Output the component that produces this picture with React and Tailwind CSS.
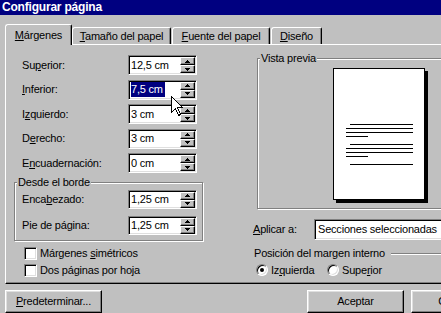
import React from 'react';

const raised = "border border-t-white border-l-white border-b-black border-r-black shadow-[inset_-1px_-1px_0_#808080,inset_1px_1px_0_#dfdfdf] bg-[#c0c0c0]";
const sunken = "border border-[#808080] border-b-white border-r-white shadow-[inset_1px_1px_0_#000,inset_-1px_-1px_0_#dfdfdf] bg-white";

const SpinBtn = ({ up }) => (
    <div className="h-[8px] w-[15px] flex items-center justify-center border border-t-white border-l-white border-b-black border-r-black shadow-[inset_-1px_-1px_0_#808080] bg-[#c0c0c0]">
        <svg width="5" height="3" viewBox="0 0 5 3" shapeRendering="crispEdges">
            {up
                ? <path d="M2 0h1v1h1v1h1v1H0V2h1V1h1z" fill="#000" />
                : <path d="M0 0h5v1H4v1H3v1H2V2H1V1H0z" fill="#000" />}
        </svg>
    </div>
);

const Field = ({ value, selected, h = 'h-[20px]' }) => (
    <div className={`${sunken} w-[69px] ${h} flex items-center justify-between pl-[2px] pr-[1px]`}>
        {selected
            ? <span className="bg-[#000080] text-white leading-[15px] pr-[2px]">{value}</span>
            : <span className="leading-[13px]">{value}</span>}
        <div className="flex flex-col">
            <SpinBtn up />
            <SpinBtn />
        </div>
    </div>
);

const Group = ({ title, className, children }) => (
    <div className={`relative border border-[#808080] shadow-[inset_1px_1px_0_#fff,1px_1px_0_#fff] ${className}`}>
        <span className="absolute -top-[7px] left-[2px] px-[1px] bg-[#c0c0c0] leading-[13px]">{title}</span>
        {children}
    </div>
);

const Lbl = ({ a, u, b }) => (
    <span className="leading-[13px] whitespace-nowrap">{a}<u>{u}</u>{b}</span>
);

const Check = ({ children }) => (
    <div className="flex items-center h-[13px]">
        <div className={`${sunken} w-[13px] h-[13px]`} />
        <div className="ml-[3px]">{children}</div>
    </div>
);

const Radio = ({ on }) => (
    <div className="w-[12px] h-[12px] rounded-full border border-[#808080] border-b-white border-r-white bg-white shadow-[inset_1px_1px_0_#000,inset_-1px_-1px_0_#dfdfdf] flex items-center justify-center">
        {on && <div className="w-[4px] h-[4px] rounded-full bg-black" />}
    </div>
);

const Tab = ({ active, w, children, className = '' }) => (
    <div className={`${w} ${active ? 'h-[21px] -mb-[1px] relative z-10 pt-[4px]' : 'h-[17px] pt-[2px]'} ${className} bg-[#c0c0c0] border-l border-t border-white border-r border-r-black rounded-tl-[3px] rounded-tr-[2px] shadow-[inset_-1px_0_0_#808080] flex justify-center`}>
        {children}
    </div>
);

const rows = [
    { l: ['Su', 'p', 'erior:'], v: '12,5 cm' },
    { l: ['', 'I', 'nferior:'], v: '7,5 cm', sel: true },
    { l: ['I', 'z', 'quierdo:'], v: '3 cm' },
    { l: ['D', 'e', 'recho:'], v: '3 cm' },
    { l: ['E', 'n', 'cuadernación:'], v: '0 cm' },
];

export default function App() {
    return (
        <div className="w-[441px] h-[313px] overflow-hidden relative bg-[#c0c0c0] text-black text-[11px] tracking-[-0.2px] font-['Liberation_Sans',Arial,sans-serif]">
            <div className="w-[520px]">
                {/* title bar */}
                <div className="h-[15px] bg-[#000080] text-white font-bold text-[12px] leading-[15px] pl-[2px] tracking-[-0.2px]">
                    Configurar página
                </div>

                {/* tabs */}
                <div className="h-[29px] flex items-end pl-[5px]">
                    <Tab active w="w-[67px]"><Lbl u="M" b="árgenes" /></Tab>
                    <Tab w="w-[99px]"><Lbl u="T" b="amaño del papel" /></Tab>
                    <Tab w="w-[98px]" className="ml-[1px]"><Lbl u="F" b="uente del papel" /></Tab>
                    <Tab w="w-[51px]" className="ml-[1px]"><Lbl u="D" b="iseño" /></Tab>
                </div>

                {/* panel */}
                <div className="ml-[5px] w-[510px] h-[240px] border border-t-white border-l-white border-b-black border-r-black shadow-[inset_-1px_-1px_0_#808080] flex">
                    <div className="w-[197px] flex flex-col pt-[10px]">
                        <div className="pl-[16px] grid grid-cols-[106px_69px] gap-y-[4.5px] items-center">
                            {rows.map((r, i) => (
                                <React.Fragment key={i}>
                                    <Lbl a={r.l[0]} u={r.l[1]} b={r.l[2]} />
                                    <Field value={r.v} selected={r.sel} />
                                </React.Fragment>
                            ))}
                        </div>

                        <Group title="Desde el borde" className="ml-[8px] mt-[9px] w-[189px] pt-[7px] pb-[5px] pl-[7px]">
                            <div className="grid grid-cols-[106px_69px] gap-y-[7px] items-center">
                                <Lbl a="Enca" u="b" b="ezado:" />
                                <Field value="1,25 cm" h="h-[19px]" />
                                <Lbl a="Pie de pá" u="g" b="ina:" />
                                <Field value="1,25 cm" h="h-[19px]" />
                            </div>
                        </Group>

                        <div className="ml-[18px] mt-[6px] flex flex-col gap-[4px]">
                            <Check><Lbl a="Márgenes " u="s" b="imétricos" /></Check>
                            <Check><Lbl a="Dos páginas por ho" u="j" b="a" /></Check>
                        </div>
                    </div>

                    <div className="ml-[50px] w-[255px] flex flex-col">
                        <Group title="Vista previa" className="ml-[4px] mt-[13px] w-[243px] h-[151px]">
                            <div className="ml-[75px] mt-[9px] w-[92px] h-[132px] bg-white border border-black shadow-[3px_3px_0_#000]">
                                <svg width="90" height="130" shapeRendering="crispEdges">
                                    <g fill="#000">
                                        <rect x="16" y="55" width="63" height="1" />
                                        <rect x="12" y="59" width="67" height="1" />
                                        <rect x="12" y="63" width="67" height="1" />
                                        <rect x="12" y="67" width="22" height="1" />
                                        <rect x="16" y="75" width="63" height="1" />
                                        <rect x="12" y="79" width="67" height="1" />
                                        <rect x="12" y="83" width="67" height="1" />
                                        <rect x="12" y="87" width="22" height="1" />
                                        <rect x="16" y="95" width="63" height="1" />
                                    </g>
                                </svg>
                            </div>
                        </Group>

                        <div className="mt-[10px] flex items-center">
                            <div className="w-[61px]"><Lbl u="A" b="plicar a:" /></div>
                            <div className={`${sunken} w-[190px] h-[21px] flex items-center pl-[3px]`}>
                                <span className="leading-[13px]">Secciones seleccionadas</span>
                            </div>
                        </div>

                        <div className="mt-[7px] flex items-center pl-[1px]">
                            <span className="leading-[13px] whitespace-nowrap">Posición del margen interno</span>
                            <div className="flex-1 ml-[6px] h-[2px] border-t border-t-[#808080] border-b border-b-white" />
                        </div>

                        <div className="mt-[2px] flex items-center pl-[3px]">
                            <div className="w-[71px] flex items-center">
                                <Radio on />
                                <span className="ml-[3px]"><Lbl a="Iz" u="q" b="uierda" /></span>
                            </div>
                            <div className="flex items-center">
                                <Radio />
                                <span className="ml-[3px]"><Lbl a="Supe" u="r" b="ior" /></span>
                            </div>
                        </div>
                    </div>
                </div>

                {/* buttons */}
                <div className="mt-[6px] ml-[5px] flex">
                    <button className={`${raised} w-[97px] h-[23px] leading-[13px]`}><Lbl u="P" b="redeterminar..." /></button>
                    <button className={`${raised} ml-[205px] w-[97px] h-[23px] leading-[13px]`}>Aceptar</button>
                    <button className={`${raised} ml-[7px] w-[97px] h-[23px] leading-[13px]`}>Cancelar</button>
                </div>
            </div>

            {/* mouse pointer */}
            <svg className="absolute left-[171px] top-[96px]" width="13" height="21" viewBox="0 0 13 21" shapeRendering="crispEdges">
                <path d="M0.5 0.5 L0.5 16.5 L4.5 12.5 L7.5 19.5 L9.5 18.5 L6.5 11.5 L11.5 11.5 Z" fill="#fff" stroke="#000" strokeWidth="1" />
            </svg>
        </div>
    );
}
